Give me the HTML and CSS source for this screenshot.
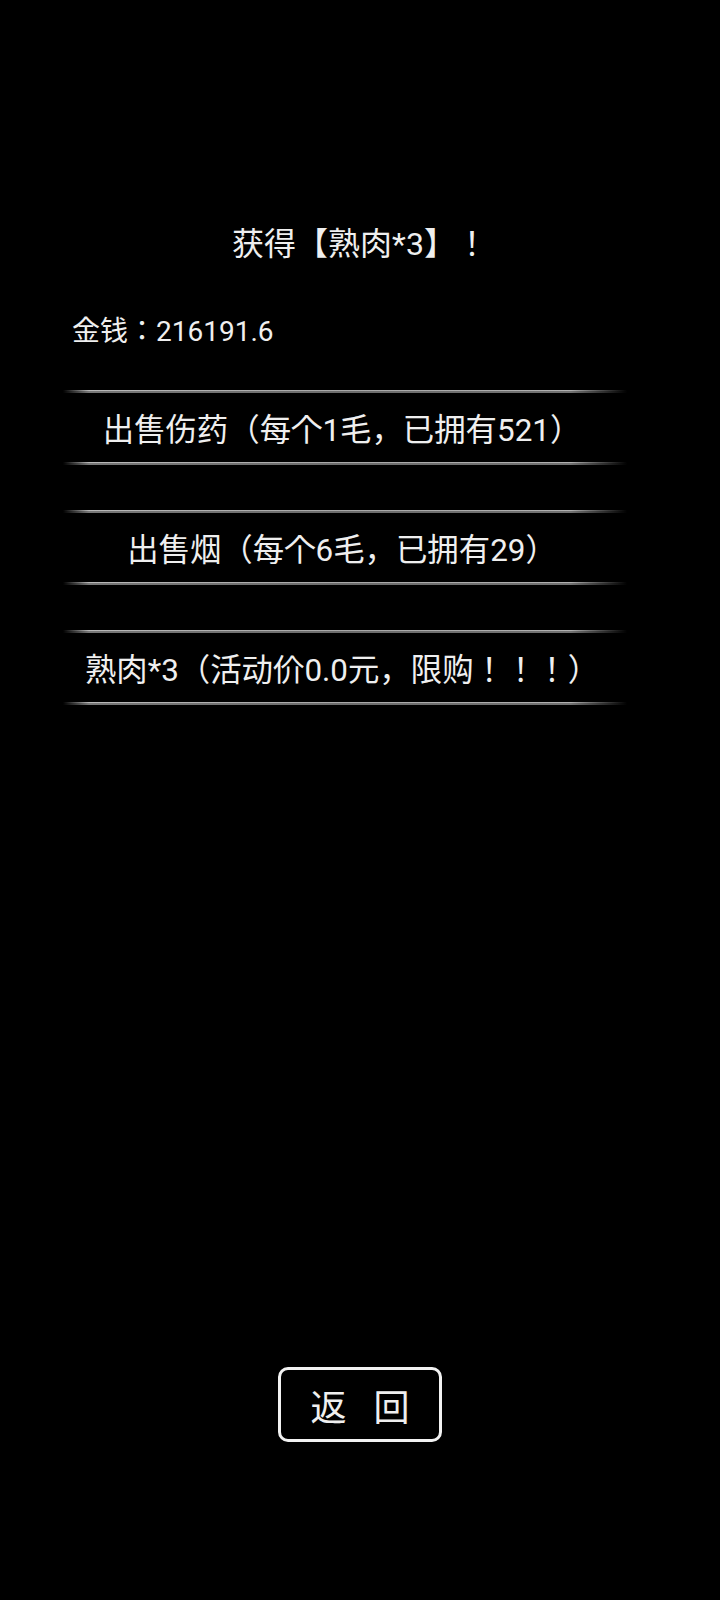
FILE: index.html
```html
<!DOCTYPE html>
<html>
<head lang="zh">
    <meta charset="UTF-8">
    <meta name="viewport" content="width=device-width, initial-scale=1.0">
    <title>商店</title>
    <link rel="stylesheet" href="styles.css">
</head>
<body>
<div class="page">
    <div class="notice">获得【熟肉*3】！</div>
    <div class="money">金钱：216191.6</div>
    <div class="shop-list">
        <div class="shop-item">
            <span class="shop-label">出售伤药（每个1毛，已拥有521）</span>
        </div>
        <div class="shop-item">
            <span class="shop-label">出售烟（每个6毛，已拥有29）</span>
        </div>
        <div class="shop-item">
            <span class="shop-label">熟肉*3（活动价0.0元，限购！！！）</span>
        </div>
    </div>
    <button class="back-btn">返 回</button>
</div>
</body>
</html>
```

FILE: styles.css
```css
html, body{
    margin: 0;
    padding: 0;
    background: #000;
}
.page{
    display: flex;
    flex-direction: column;
    min-height: 1600px;
    box-sizing: border-box;
    padding: 220px 0 158px;
    color: #efefef;
    font-family: Roboto, "Noto Sans CJK JP", sans-serif;
}
.notice{
    height: 48px;
    font-size: 32px;
    line-height: 48px;
    text-align: center;
}
.money{
    margin-top: 44px;
    padding-left: 72px;
    height: 40px;
    font-size: 28px;
    line-height: 40px;
}
.shop-list{
    display: flex;
    flex-direction: column;
    gap: 45px;
    margin: 38px 0 0 63px;
    width: 564px;
}
.shop-item{
    display: flex;
    flex-direction: column;
    height: 75px;
}
.shop-item::before,
.shop-item::after{
    content: "";
    display: block;
    height: 3px;
    background:
        linear-gradient(to bottom, rgba(0,0,0,0) 0, rgba(0,0,0,0) 1px, rgba(0,0,0,0.35) 1px),
        linear-gradient(to right, rgba(150,150,150,0) 0, #b8b8b8 26px, #a8a8a8 50%, #b0b0b0 90%, rgba(150,150,150,0) 100%);
}
.shop-label{
    flex: 1;
    display: flex;
    align-items: center;
    justify-content: center;
    padding-right: 6px;
    font-size: 31.4px;
    white-space: nowrap;
}
.back-btn{
    margin: auto auto 0;
    width: 164px;
    height: 75px;
    padding: 0;
    background: #000;
    color: #efefef;
    border: 3px solid #f2f2f2;
    border-radius: 10px;
    font-family: Roboto, "Noto Sans CJK JP", sans-serif;
    font-size: 36px;
    word-spacing: 18px;
}
```
